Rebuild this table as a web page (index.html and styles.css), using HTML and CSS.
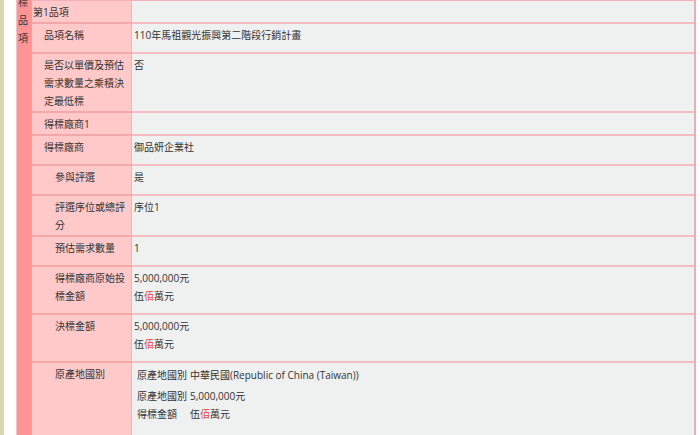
FILE: index.html
```html
<!DOCTYPE html>
<html lang="zh-Hant">
<head>
<meta charset="utf-8">
<title>決標品項</title>
<link rel="stylesheet" href="styles.css">
</head>
<body>
<div class="page">
  <div class="strip"></div>
  <div class="gap"></div>
  <div class="table">
    <div class="side"><div class="side-text">決標品項</div></div>
    <div class="rows">
      <div class="row first"><div class="label l0">第1品項</div><div class="value"></div></div>
      <div class="row"><div class="label l1">品項名稱</div><div class="value">110年馬祖觀光振興第二階段行銷計畫</div></div>
      <div class="row"><div class="label l1">是否以單價及預估需求數量之乘積決定最低標</div><div class="value">否</div></div>
      <div class="row"><div class="label l1">得標廠商1</div><div class="value empty"></div></div>
      <div class="row"><div class="label l1">得標廠商</div><div class="value">御品妍企業社</div></div>
      <div class="row"><div class="label l2">參與評選</div><div class="value">是</div></div>
      <div class="row"><div class="label l2">評選序位或總評分</div><div class="value">序位1</div></div>
      <div class="row"><div class="label l2">預估需求數量</div><div class="value">1</div></div>
      <div class="row"><div class="label l2">得標廠商原始投標金額</div><div class="value">5,000,000元<br>伍<span class="red">佰</span>萬元</div></div>
      <div class="row"><div class="label l2">決標金額</div><div class="value">5,000,000元<br>伍<span class="red">佰</span>萬元</div></div>
      <div class="row last"><div class="label l2">原產地國別</div>
        <div class="value nested">
          <div class="sub first-sub"><span class="sub-k">原產地國別</span><span class="sub-v">中華民國(Republic of China (Taiwan))</span></div>
          <div class="sub"><span class="sub-k">原產地國別</span><span class="sub-v">5,000,000元</span><span class="sub-k">得標金額</span><span class="sub-v">伍<span class="red">佰</span>萬元</span></div>
        </div>
      </div>
    </div>
  </div>
</div>
</body>
</html>
```

FILE: styles.css
```css
html, body {
  margin: 0;
  padding: 0;
  background: #ffffff;
}
body {
  font-family: "Open Sans", "Noto Sans CJK TC", sans-serif;
  font-size: 10px;
  line-height: 18px;
  color: #333333;
  overflow: hidden;
  height: 435px;
}
.page {
  display: flex;
  height: 435px;
  overflow: hidden;
}
.strip {
  width: 4px;
  flex: none;
  background: #d9d5b6;
}
.gap {
  width: 12px;
  flex: none;
  background: #ffffff;
}
.table {
  display: flex;
  width: 677px;
  flex: none;
  border-left: 1px solid #f3c2c2;
  border-right: 2px solid #f1aab4;
}
.side {
  width: 14px;
  flex: none;
  background: #ff9494;
  border-right: 1px solid #f49d9d;
  overflow: hidden;
}
.side-text {
  width: 11px;
  padding-left: 1px;
  line-height: 18px;
  margin-top: -25px;
  color: #333333;
}
.rows {
  flex: 1;
  display: flex;
  flex-direction: column;
}
.row {
  display: grid;
  grid-template-columns: 100px 1fr;
}
.row.first .label, .row.first .value {
  border-top: 1px solid #f2b0b8;
}
.label {
  background: #ffc9c9;
  border-right: 1px solid #f4b2b8;
  border-bottom: 2px solid #f2a8ab;
  padding: 2px 4px 1px 0;
}
.l0 { padding-left: 1px; }
.l1 { padding-left: 12px; }
.l2 { padding-left: 23px; }
.value {
  background: #eff0f0;
  border-bottom: 2px solid #f5bcc2;
  padding: 2px 2px 8px 2px;
}
.row.first .value {
  padding-bottom: 0;
}
.row.last .value, .row.last .label {
  border-bottom: none;
  min-height: 80px;
}
.red {
  color: #e0473d;
}
.nested {
  padding-left: 5px;
  padding-top: 3px;
}
.sub {
  display: grid;
  grid-template-columns: 53px 1fr;
}
.first-sub {
  margin-bottom: 3px;
}
```
